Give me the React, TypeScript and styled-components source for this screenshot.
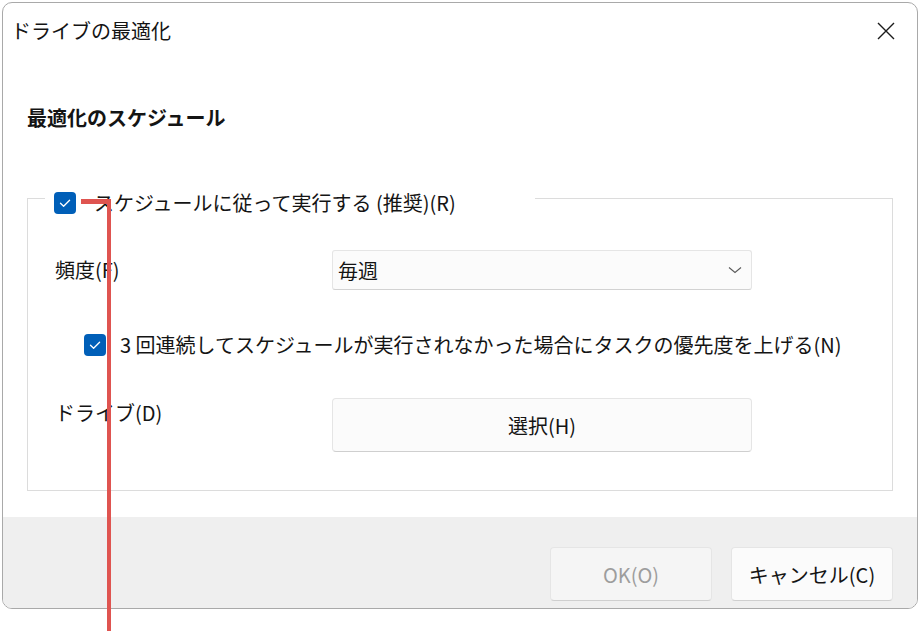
import styled, { createGlobalStyle } from 'styled-components';

const GlobalStyle = createGlobalStyle`
  html, body {
    margin: 0;
    padding: 0;
    background: #ffffff;
  }
  body {
    font-family: "Noto Sans CJK JP", "Noto Sans", sans-serif;
    color: #141414;
  }
`;

const Stage = styled.div`
  position: relative;
  width: 921px;
  height: 631px;
  padding: 2px 0 0 2px;
  box-sizing: border-box;
  overflow: hidden;
`;

const Window = styled.div`
  width: 916px;
  height: 607px;
  box-sizing: border-box;
  border: 1px solid #a9a9a9;
  border-radius: 10px;
  background: #ffffff;
  display: flex;
  flex-direction: column;
  overflow: hidden;
`;

const TitleBar = styled.div`
  height: 55px;
  flex-shrink: 0;
  display: flex;
  align-items: center;
  justify-content: space-between;
  padding: 0 22px 0 8px;
  font-size: 20px;
  line-height: 30px;
`;

const CloseIcon = styled.svg`
  width: 18px;
  height: 18px;
  display: block;
`;

const Content = styled.div`
  padding: 0 24px;
`;

const Heading = styled.h2`
  margin: 45px 0 0;
  font-size: 20px;
  line-height: 30px;
  font-weight: 700;
`;

const Group = styled.fieldset`
  margin: 45px 0 0;
  padding: 0;
  min-width: 0;
  border: 1px solid #dcdcdc;
`;

const Legend = styled.legend`
  margin-left: 17px;
  width: 490px;
  box-sizing: border-box;
  padding: 10px 0 0 9px;
`;

const CheckRow = styled.label<{ $indent?: number; $gap: number; $top?: number }>`
  display: flex;
  align-items: center;
  gap: ${({ $gap }) => $gap}px;
  height: 30px;
  margin: ${({ $top }) => $top ?? 0}px 0 0 ${({ $indent }) => $indent ?? 0}px;
  font-size: 20px;
  line-height: 30px;
  white-space: nowrap;
`;

const Box = styled.span`
  width: 22px;
  height: 22px;
  flex-shrink: 0;
  border-radius: 4px;
  background: #005fb8;
  display: flex;
  align-items: center;
  justify-content: center;
`;

const GroupBody = styled.div`
  padding: 32px 0 38px 27px;
  display: flex;
  flex-direction: column;
`;

const FieldRow = styled.div<{ $gap: number }>`
  display: grid;
  grid-template-columns: 277px 420px;
  align-items: start;
  margin-top: ${({ $gap }) => $gap}px;
`;

const FieldLabel = styled.span<{ $line: number }>`
  font-size: 20px;
  line-height: ${({ $line }) => $line}px;
  white-space: nowrap;
`;

const Select = styled.div`
  height: 40px;
  box-sizing: border-box;
  border: 1px solid #e5e5e5;
  border-bottom-color: #d2d2d2;
  border-radius: 3px;
  background: #fbfbfb;
  display: flex;
  align-items: center;
  justify-content: space-between;
  padding: 0 9px 0 5px;
  font-size: 20px;
`;

const Chevron = styled.svg`
  width: 14px;
  height: 8px;
  display: block;
`;

const Button = styled.button<{ $w: string; $h: number; $disabled?: boolean }>`
  width: ${({ $w }) => $w};
  height: ${({ $h }) => $h}px;
  box-sizing: border-box;
  border: 1px solid #e5e5e5;
  border-bottom-color: #cfcfcf;
  border-radius: 4px;
  background: ${({ $disabled }) => ($disabled ? '#f5f5f5' : '#fbfbfb')};
  color: ${({ $disabled }) => ($disabled ? '#9d9d9d' : '#141414')};
  font-family: inherit;
  font-size: 20px;
  padding: 0;
`;

const Footer = styled.div`
  margin-top: auto;
  height: 91px;
  flex-shrink: 0;
  box-sizing: border-box;
  background: #efefef;
  display: flex;
  justify-content: flex-end;
  gap: 19px;
  padding: 30px 24px 0 0;
`;

const Marker = styled.div<{ $l: number; $t: number; $w: number; $h: number }>`
  position: absolute;
  left: ${({ $l }) => $l}px;
  top: ${({ $t }) => $t}px;
  width: ${({ $w }) => $w}px;
  height: ${({ $h }) => $h}px;
  background: #df5450;
`;

function Check() {
  return (
    <Box>
      <svg width="22" height="22" viewBox="0 0 22 22">
        <polyline points="6.5,11.2 9.6,14.2 15.6,8.2" fill="none" stroke="#ffffff" strokeWidth="1.3" strokeLinecap="round" strokeLinejoin="round" />
      </svg>
    </Box>
  );
}

export default function App() {
  return (
    <>
      <GlobalStyle />
      <Stage>
        <Window>
          <TitleBar>
            <span>ドライブの最適化</span>
            <CloseIcon viewBox="0 0 18 18">
              <path d="M1 1 L17 17 M17 1 L1 17" stroke="#1b1b1b" strokeWidth="1.4" fill="none" />
            </CloseIcon>
          </TitleBar>
          <Content>
            <Heading>最適化のスケジュール</Heading>
            <Group>
              <Legend>
                <CheckRow $gap={18}>
                  <Check />
                  スケジュールに従って実行する (推奨)(R)
                </CheckRow>
              </Legend>
              <GroupBody>
                <FieldRow $gap={0}>
                  <FieldLabel $line={40}>頻度(F)</FieldLabel>
                  <Select>
                    <span>毎週</span>
                    <Chevron viewBox="0 0 14 8">
                      <polyline points="1,1.5 7,6.5 13,1.5" fill="none" stroke="#5a5a5a" strokeWidth="1.1" />
                    </Chevron>
                  </Select>
                </FieldRow>
                <CheckRow $gap={14} $indent={29} $top={40}>
                  <Check />
                  3 回連続してスケジュールが実行されなかった場合にタスクの優先度を上げる(N)
                </CheckRow>
                <FieldRow $gap={38}>
                  <FieldLabel $line={30}>ドライブ(D)</FieldLabel>
                  <Button $w="420px" $h={54}>選択(H)</Button>
                </FieldRow>
              </GroupBody>
            </Group>
          </Content>
          <Footer>
            <Button $w="162px" $h={54} $disabled>OK(O)</Button>
            <Button $w="162px" $h={54}>キャンセル(C)</Button>
          </Footer>
        </Window>
        <Marker $l={81} $t={199} $w={30} $h={5} />
        <Marker $l={107} $t={199} $w={4} $h={432} />
      </Stage>
    </>
  );
}
